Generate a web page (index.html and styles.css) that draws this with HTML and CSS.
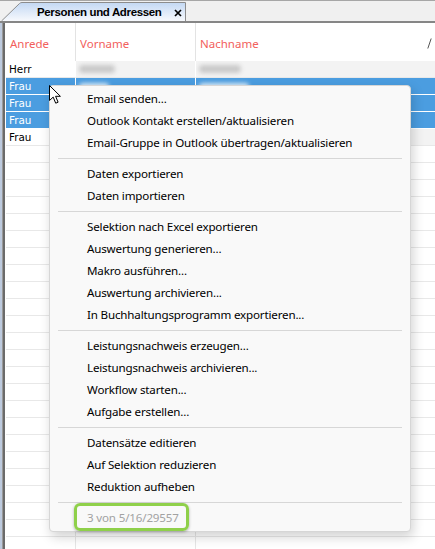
FILE: index.html
```html
<!DOCTYPE html>
<html lang="de">
<head>
<meta charset="utf-8">
<title>Personen und Adressen</title>
<link rel="stylesheet" href="styles.css">
</head>
<body>
<div class="app">
  <div class="tabstrip">
    <div class="tab">
      <svg class="tab-shape" viewBox="0 0 185 19" preserveAspectRatio="none">
        <defs>
          <linearGradient id="tg" x1="0" y1="0" x2="0" y2="1">
            <stop offset="0" stop-color="#c3d8f3"/>
            <stop offset="1" stop-color="#f7f9fd"/>
          </linearGradient>
        </defs>
        <path d="M0.5 19 L18.5 1.5 Q19.5 0.5 21 0.5 L184.5 0.5 L184.5 19 Z" fill="url(#tg)" stroke="none"/>
        <path d="M0.5 19 L18.5 1.5 Q19.5 0.5 21 0.5 L184.5 0.5 L184.5 19" fill="none" stroke="#8c8c8c" stroke-width="1"/>
      </svg>
      <span class="tab-label">Personen und Adressen</span>
      <svg class="tab-close" viewBox="0 0 8 8"><path d="M1 1 L7 7 M7 1 L1 7" stroke="#000" stroke-width="1.7" fill="none"/></svg>
    </div>
  </div>
  <div class="frame">
    <div class="edge"></div>
    <div class="grid">
      <div class="row head">
        <div class="cell c1">Anrede</div>
        <div class="cell c2">Vorname</div>
        <div class="cell c3">Nachname<span class="grip"><svg viewBox="0 0 5 11"><path d="M0.8 10.5 L4.2 0.5" stroke="#555" stroke-width="1" fill="none"/></svg></span></div>
      </div>
      <div class="row data">
        <div class="cell c1">Herr</div>
        <div class="cell c2 ro"><span class="blob gray w36"></span></div>
        <div class="cell c3 ro"><span class="blob gray w44"></span></div>
      </div>
      <div class="row sel">
        <div class="cell c1">Frau</div>
        <div class="cell c2"><span class="blob white w30"></span></div>
        <div class="cell c3"><span class="blob white w50"></span></div>
      </div>
      <div class="row sel">
        <div class="cell c1">Frau</div>
        <div class="cell c2"></div>
        <div class="cell c3"></div>
      </div>
      <div class="row sel">
        <div class="cell c1">Frau</div>
        <div class="cell c2"></div>
        <div class="cell c3"></div>
      </div>
      <div class="row data">
        <div class="cell c1">Frau</div>
        <div class="cell c2 ro"></div>
        <div class="cell c3 ro"></div>
      </div>
      <div class="row"><div class="cell c1"></div><div class="cell c2"></div><div class="cell c3"></div></div>
      <div class="row"><div class="cell c1"></div><div class="cell c2"></div><div class="cell c3"></div></div>
      <div class="row"><div class="cell c1"></div><div class="cell c2"></div><div class="cell c3"></div></div>
      <div class="row"><div class="cell c1"></div><div class="cell c2"></div><div class="cell c3"></div></div>
      <div class="row"><div class="cell c1"></div><div class="cell c2"></div><div class="cell c3"></div></div>
      <div class="row"><div class="cell c1"></div><div class="cell c2"></div><div class="cell c3"></div></div>
      <div class="row"><div class="cell c1"></div><div class="cell c2"></div><div class="cell c3"></div></div>
      <div class="row"><div class="cell c1"></div><div class="cell c2"></div><div class="cell c3"></div></div>
      <div class="row"><div class="cell c1"></div><div class="cell c2"></div><div class="cell c3"></div></div>
      <div class="row"><div class="cell c1"></div><div class="cell c2"></div><div class="cell c3"></div></div>
      <div class="row"><div class="cell c1"></div><div class="cell c2"></div><div class="cell c3"></div></div>
      <div class="row"><div class="cell c1"></div><div class="cell c2"></div><div class="cell c3"></div></div>
      <div class="row"><div class="cell c1"></div><div class="cell c2"></div><div class="cell c3"></div></div>
      <div class="row"><div class="cell c1"></div><div class="cell c2"></div><div class="cell c3"></div></div>
      <div class="row"><div class="cell c1"></div><div class="cell c2"></div><div class="cell c3"></div></div>
      <div class="row"><div class="cell c1"></div><div class="cell c2"></div><div class="cell c3"></div></div>
      <div class="row"><div class="cell c1"></div><div class="cell c2"></div><div class="cell c3"></div></div>
      <div class="row"><div class="cell c1"></div><div class="cell c2"></div><div class="cell c3"></div></div>
      <div class="row"><div class="cell c1"></div><div class="cell c2"></div><div class="cell c3"></div></div>
      <div class="row"><div class="cell c1"></div><div class="cell c2"></div><div class="cell c3"></div></div>
      <div class="row"><div class="cell c1"></div><div class="cell c2"></div><div class="cell c3"></div></div>
      <div class="row"><div class="cell c1"></div><div class="cell c2"></div><div class="cell c3"></div></div>
      <div class="row"><div class="cell c1"></div><div class="cell c2"></div><div class="cell c3"></div></div>
      <div class="row"><div class="cell c1"></div><div class="cell c2"></div><div class="cell c3"></div></div>
    </div>
  </div>

  <div class="menu">
    <div class="mi">Email senden...</div>
    <div class="mi">Outlook Kontakt erstellen/aktualisieren</div>
    <div class="mi">Email-Gruppe in Outlook übertragen/aktualisieren</div>
    <div class="sep"></div>
    <div class="mi">Daten exportieren</div>
    <div class="mi">Daten importieren</div>
    <div class="sep"></div>
    <div class="mi">Selektion nach Excel exportieren</div>
    <div class="mi">Auswertung generieren...</div>
    <div class="mi">Makro ausführen...</div>
    <div class="mi">Auswertung archivieren...</div>
    <div class="mi">In Buchhaltungsprogramm exportieren...</div>
    <div class="sep"></div>
    <div class="mi">Leistungsnachweis erzeugen...</div>
    <div class="mi">Leistungsnachweis archivieren...</div>
    <div class="mi">Workflow starten...</div>
    <div class="mi">Aufgabe erstellen...</div>
    <div class="sep"></div>
    <div class="mi">Datensätze editieren</div>
    <div class="mi">Auf Selektion reduzieren</div>
    <div class="mi">Reduktion aufheben</div>
    <div class="sep"></div>
    <div class="mi disabled"><span class="hl"></span>3 von 5/16/29557</div>
  </div>

  <svg class="cursor" viewBox="0 0 13 20">
    <path d="M0.5 0.5 L0.5 15.5 L4.2 12.1 L6.7 18.2 L9.1 17.2 L6.6 11.3 L11.4 11.3 Z" fill="#fff" stroke="#000" stroke-width="1" stroke-linejoin="miter"/>
  </svg>
</div>
</body>
</html>
```

FILE: styles.css
```css
html, body {
  margin: 0;
  padding: 0;
}
body {
  width: 435px;
  height: 549px;
  overflow: hidden;
  background: #ffffff;
  font-family: "Noto Sans", "Liberation Sans", sans-serif;
}
.app {
  position: relative;
  width: 435px;
  height: 549px;
  overflow: hidden;
  display: flex;
  flex-direction: column;
}

/* tab strip */
.tabstrip {
  flex: none;
  height: 20px;
  border-top: 1px solid #a6a6a6;
  border-bottom: 2px solid #868686;
  background: #f0f0f0;
  display: flex;
  align-items: flex-end;
}
.tab {
  position: relative;
  width: 185px;
  height: 19px;
  margin-left: 1px;
  box-sizing: border-box;
  padding-left: 36px;
  display: flex;
  align-items: center;
}
.tab-shape {
  position: absolute;
  left: 0;
  top: 0;
  width: 100%;
  height: 100%;
}
.tab-label {
  position: relative;
  font-family: "Liberation Sans", Arial, sans-serif;
  font-weight: bold;
  font-size: 11.5px;
  letter-spacing: -0.35px;
  color: #000;
  padding-top: 1px;
}
.tab-close {
  position: relative;
  width: 8px;
  height: 8px;
  margin-left: 12px;
  margin-top: 2px;
}

/* frame + grid */
.frame {
  flex: 1;
  display: flex;
  min-height: 0;
}
.edge {
  flex: none;
  width: 5px;
  background: linear-gradient(to right, #bdcade 0 2px, #9a9a9a 2px 3px, #6b6b6b 3px 5px);
}
.grid {
  flex: 1;
  padding-left: 1px;
  display: flex;
  flex-direction: column;
  overflow: hidden;
}
.row {
  flex: none;
  display: flex;
  height: 17px;
}
.cell {
  box-sizing: border-box;
  border-right: 1px solid #e6e6e6;
  border-bottom: 1px solid #e8e8e8;
  font-family: "DejaVu Sans", Verdana, sans-serif;
  font-size: 10.4px;
  line-height: 16px;
  padding-left: 3px;
  color: #000;
  overflow: hidden;
  white-space: nowrap;
}
.c1 { width: 70px; flex: none; }
.c2 { width: 120px; flex: none; }
.c3 { flex: 1; border-right: none; }

.head {
  height: 38px;
}
.head .cell {
  border-bottom: none;
  border-right-color: #e3e3e3;
  font-family: "Noto Sans", sans-serif;
  font-size: 11.5px;
  color: #f2605c;
  padding-left: 4px;
  padding-top: 3px;
  display: flex;
  align-items: center;
}
.head .c3 {
  justify-content: space-between;
}
.grip {
  display: flex;
  margin-right: 3px;
}
.grip svg {
  width: 5px;
  height: 11px;
}

.data .c1 {
  border-right-color: #ffffff;
}
.data .ro {
  background: #f3f3f3;
  border-right-color: #ffffff;
}
.sel .cell {
  background: #4b9de0;
  color: #ffffff;
  border-right-color: #ffffff;
  border-bottom-color: #ffffff;
}

.blob {
  display: inline-block;
  height: 8px;
  margin-top: 4px;
  border-radius: 4px;
  filter: blur(2px);
}
.blob.gray { background: #c9c9c9; }
.blob.white { background: #d9ebfa; margin-top: 5px; }
.w30 { width: 30px; }
.w36 { width: 36px; }
.w44 { width: 42px; }
.w50 { width: 50px; }

/* context menu */
.menu {
  position: absolute;
  left: 49px;
  top: 85px;
  width: 362px;
  height: 447px;
  box-sizing: border-box;
  padding-top: 2px;
  background: #f9f9f9;
  border: 1px solid #d6d6d6;
  border-radius: 4px;
  box-shadow: 2px 5px 12px rgba(0, 0, 0, 0.18);
}
.mi {
  position: relative;
  height: 22px;
  line-height: 22px;
  padding-left: 37px;
  font-family: "Noto Sans", sans-serif;
  font-size: 11.6px;
  letter-spacing: -0.17px;
  color: #000;
  white-space: nowrap;
}
.mi.disabled {
  color: #a2a2a2;
}
.sep {
  height: 1px;
  margin: 4px 8px;
  background: #d7d7d7;
}
.hl {
  position: absolute;
  left: 24px;
  top: -4px;
  width: 115px;
  height: 28px;
  box-sizing: border-box;
  border: 3px solid #8fd04a;
  border-radius: 6px;
  box-shadow: 0 1px 3px rgba(0, 0, 0, 0.3);
}

.cursor {
  position: absolute;
  left: 49px;
  top: 85px;
  width: 13px;
  height: 20px;
}
```
